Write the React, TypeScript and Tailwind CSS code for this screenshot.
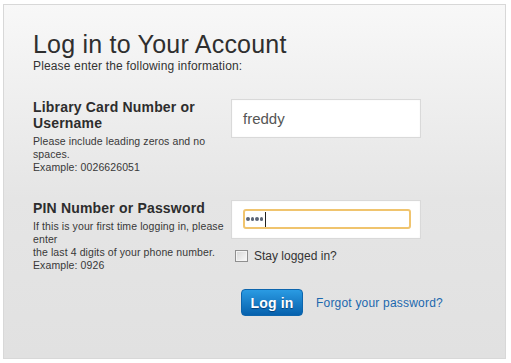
import React from "react";

export default function App() {
  return (
    <div className="w-[511px] h-[363px] bg-white pl-[3px] pt-[4px]" style={{ fontFamily: '"Liberation Sans", Arial, Helvetica, sans-serif' }}>
      <div className="w-[503px] h-[355px] border border-[#d8d8d8] bg-gradient-to-b from-[#f8f8f8] via-[#e5e5e5] via-55% to-[#e1e1e1] pl-[29px] pt-[27px] text-[#333]">
        <h1 className="text-[25px] leading-[25px] font-normal tracking-[0.22px] text-[#2f2f2f]">Log in to Your Account</h1>
        <p className="mt-[2px] text-[12px] leading-[14px] tracking-[0.15px] text-[#333]">Please enter the following information:</p>

        {/* Row 1 */}
        <div className="mt-[26px] flex">
          <div className="w-[198px] shrink-0">
            <div className="text-[14px] leading-[16px] font-bold tracking-[0.18px] text-[#2d2d2d]">Library Card Number or Username</div>
            <div className="mt-[4px] text-[10.5px] leading-[13px] tracking-[0.1px] text-[#383838]">
              Please include leading zeros and no spaces.
              <br />
              Example: 0026626051
            </div>
          </div>
          <div className="w-[190px] h-[39px] bg-white border border-[#d9d9d9] shadow-[inset_0_0_2px_rgba(0,0,0,0.06)] flex items-center pl-[11px]">
            <span className="text-[15px] leading-[18px] text-[#555]">freddy</span>
          </div>
        </div>

        {/* Row 2 */}
        <div className="mt-[26px] flex">
          <div className="w-[198px] shrink-0">
            <div className="text-[14px] leading-[16px] font-bold tracking-[0.18px] text-[#2d2d2d]">PIN Number or Password</div>
            <div className="mt-[4px] text-[10.5px] leading-[13px] tracking-[0.1px] text-[#383838]">
              If this is your first time logging in, please enter
              <br />
              the last 4 digits of your phone number.
              <br />
              Example: 0926
            </div>
          </div>
          <div className="flex flex-col">
            <div className="w-[190px] h-[39px] bg-white border border-[#d9d9d9] shadow-[inset_0_0_2px_rgba(0,0,0,0.06)] pl-[11px] pt-[8px]">
              <div className="w-[168px] h-[20px] border-2 border-[#f0c46e] rounded-[3px] bg-white flex items-center pl-[1px]">
                <div className="flex items-center gap-[1px]">
                  <span className="w-[3.5px] h-[3.5px] rounded-full bg-[#5b6577]"></span>
                  <span className="w-[3.5px] h-[3.5px] rounded-full bg-[#5b6577]"></span>
                  <span className="w-[3.5px] h-[3.5px] rounded-full bg-[#5b6577]"></span>
                  <span className="w-[3.5px] h-[3.5px] rounded-full bg-[#5b6577]"></span>
                </div>
                <span className="ml-[2px] w-[1px] h-[15px] bg-[#222]"></span>
              </div>
            </div>
            <div className="mt-[10px] h-[14px] flex items-center pl-[4px]">
              <span className="w-[13px] h-[12px] border border-[#8f8f8f] bg-gradient-to-br from-[#d6d6d6] to-[#fbfbfb] shadow-[inset_0_0_0_1px_#f4f4f4]"></span>
              <span className="ml-[6px] text-[12px] leading-[14px] text-[#333]">Stay logged in?</span>
            </div>
            <div className="mt-[26px] flex items-center pl-[10px]">
              <button className="w-[62px] h-[27px] rounded-[4px] border border-[#0d65ad] bg-gradient-to-b from-[#2a9be3] to-[#0661ad] text-white text-[14px] font-bold leading-[16px] tracking-[0.2px] [text-shadow:0_1px_1px_rgba(0,40,90,0.7)]">
                Log in
              </button>
              <a className="ml-[13px] text-[12px] leading-[14px] tracking-[0.2px] text-[#1c68ae] cursor-pointer">Forgot your password?</a>
            </div>
          </div>
        </div>
      </div>
    </div>
  );
}
